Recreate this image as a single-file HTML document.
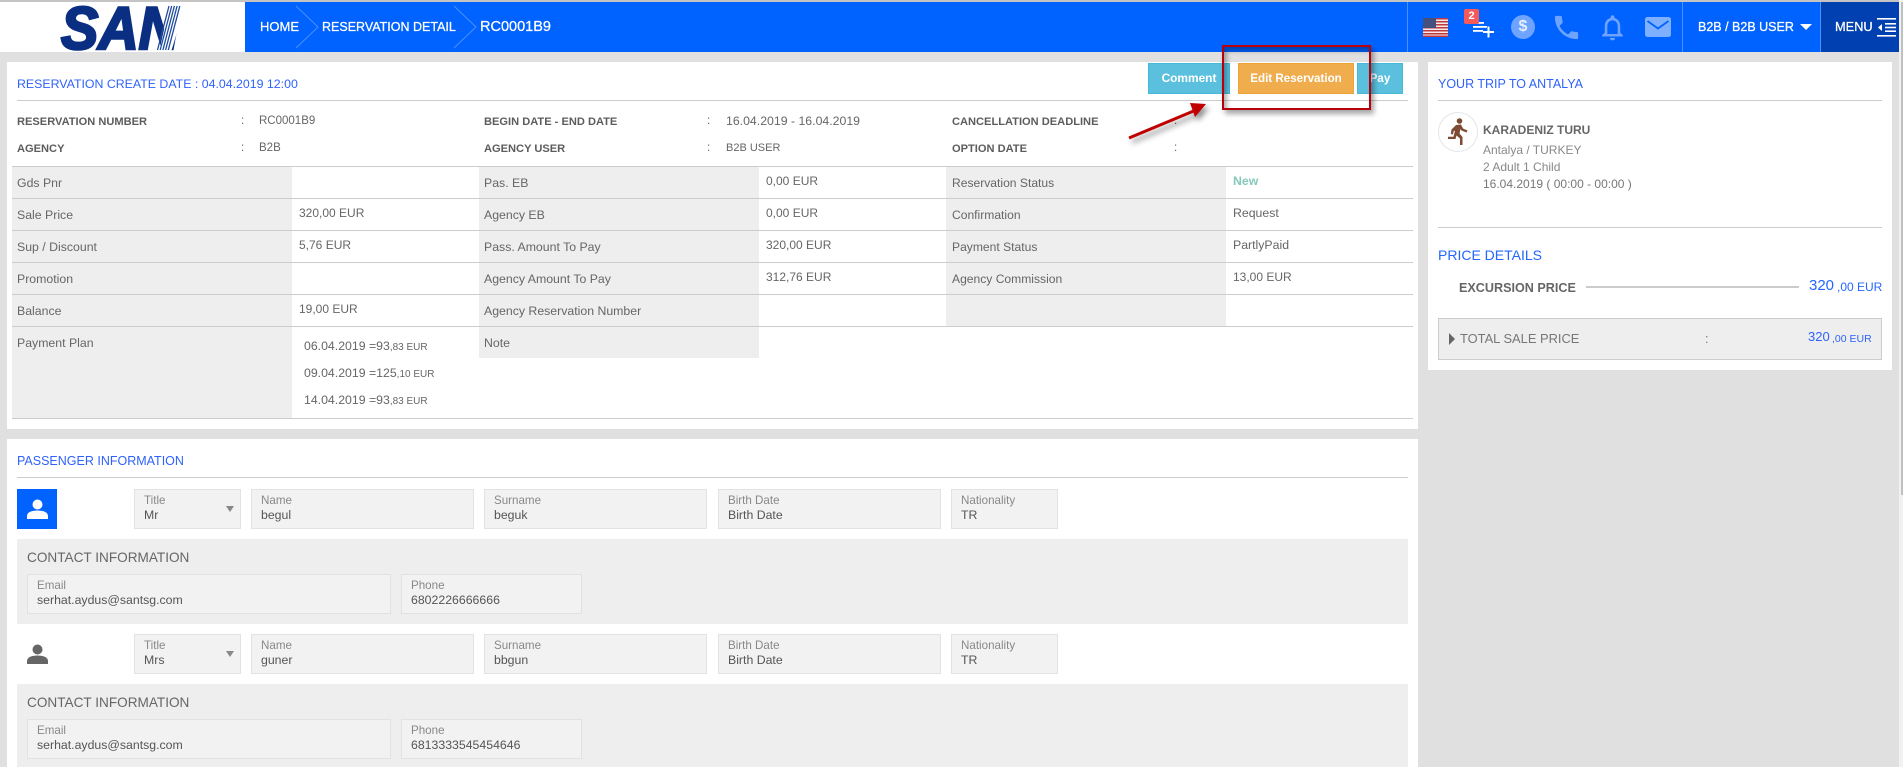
<!DOCTYPE html>
<html lang="en">
<head>
<meta charset="utf-8">
<title>Reservation Detail</title>
<style>
html,body{margin:0;padding:0;width:1903px;height:767px;overflow:hidden;background:#e0e0e0;font-family:"Liberation Sans",sans-serif;color:#666}
.a{position:absolute}
.t{position:absolute;white-space:nowrap;line-height:16px;font-size:12.3px}
.v{font-size:12px}
.h{color:#2f62fb;font-size:12.35px}
.b{font-weight:bold;font-size:11.1px;color:#5d5d5d}
.w{color:#fff}
.line{position:absolute;height:1px;background:#ccc}
.g{position:absolute;background:#eee}
.f{position:absolute;box-sizing:border-box;background:#f2f2f2;border:1px solid #e2e2e2;height:40px}
.f i{position:absolute;left:9px;top:3px;font-style:normal;font-size:11.6px;line-height:16px;color:#888;white-space:nowrap}
.f b{position:absolute;left:9px;top:17px;font-weight:normal;font-size:12.3px;line-height:16px;color:#555;white-space:nowrap}
.btn{position:absolute;box-sizing:border-box;height:31px;color:#fff;font-weight:bold;font-size:11.6px;line-height:29px;text-align:center;border:1px solid #46b8da;background:#5bc0de}
small{font-size:10px}
</style>
</head>
<body>
<!-- Header -->
<div class="a" style="left:0;top:0;width:1903px;height:2px;background:#c4c4c4"></div>
<div class="a" style="left:0;top:2px;width:245px;height:50px;background:#fff"></div>
<div class="a" style="left:245px;top:2px;width:1654px;height:50px;background:#0062ff"></div>
<div class="a" style="left:1820px;top:2px;width:79px;height:50px;background:#0040b0"></div>
<div class="a" style="left:1407px;top:2px;width:1px;height:50px;background:#4c90ff"></div>
<div class="a" style="left:1682px;top:2px;width:1px;height:50px;background:#4c90ff"></div>
<div class="a" style="left:1820px;top:2px;width:1px;height:50px;background:#4c90ff"></div>

<!-- Logo -->
<svg class="a" style="left:40px;top:0" width="160" height="56" viewBox="0 0 160 56">
  <text x="21" y="49" font-family="Liberation Sans" font-weight="bold" font-style="italic" font-size="60" fill="#0a2f82" stroke="#0a2f82" stroke-width="2.6" textLength="118" lengthAdjust="spacingAndGlyphs">SAN</text>
  <path d="M119 52 L131 52 L146 3 L130 3 Z" fill="#fff"/>
  <g stroke="#1d4a9c" stroke-width="1.3">
    <line x1="117.500" y1="50" x2="129" y2="6"/><line x1="120.200" y1="50" x2="131.700" y2="6"/><line x1="122.900" y1="50" x2="134.400" y2="6"/><line x1="125.600" y1="50" x2="137.100" y2="6"/><line x1="128.300" y1="50" x2="139.800" y2="6"/>
  </g>
</svg>

<!-- Breadcrumb -->
<div class="t w" style="left:260px;top:19px;font-size:13px;-webkit-text-stroke:.25px #fff">HOME</div>
<div class="t w" style="left:322px;top:19px;font-size:12.5px;-webkit-text-stroke:.25px #fff">RESERVATION DETAIL</div>
<div class="t w" style="left:480px;top:19px;font-size:14.5px;-webkit-text-stroke:.25px #fff">RC0001B9</div>
<svg class="a" style="left:290px;top:2px" width="200" height="50" fill="none" stroke="#4c90ff" stroke-width="1">
  <path d="M6 4 L28 25 L6 46"/><path d="M164 4 L186 25 L164 46"/>
</svg>

<!-- Flag -->
<svg class="a" style="left:1423px;top:18px" width="25" height="19" viewBox="0 0 25 19">
  <rect width="25" height="19" fill="#f3e9e9"/>
  <g fill="#c0393f"><rect y="0" width="25" height="1.5"/><rect y="3" width="25" height="1.5"/><rect y="6" width="25" height="1.5"/><rect y="9" width="25" height="1.5"/><rect y="12" width="25" height="1.5"/><rect y="15" width="25" height="1.5"/><rect y="17.5" width="25" height="1.5"/></g>
  <rect width="13" height="10" fill="#46507e"/>
</svg>

<!-- List plus with badge -->
<svg class="a" style="left:1470px;top:18px" width="28" height="20" viewBox="0 0 28 20" fill="#fff">
  <rect x="3" y="4" width="11" height="1.800"/><rect x="3" y="8" width="14" height="1.800"/><rect x="3" y="12" width="10" height="1.800"/>
  <rect x="13" y="13" width="11" height="2"/><rect x="17.500" y="8.500" width="2" height="11"/>
</svg>
<div class="a" style="left:1464px;top:9px;width:15px;height:15px;border-radius:2px;background:#f55a5a;color:#fff;font-weight:bold;font-size:11px;line-height:15px;text-align:center">2</div>

<!-- Dollar -->
<div class="a" style="left:1511px;top:15px;width:24px;height:24px;border-radius:50%;background:#6ea4ff;color:#e6efff;font-weight:bold;font-size:16px;line-height:24px;text-align:center">$</div>
<!-- Phone -->
<svg class="a" style="left:1551px;top:12px" width="31" height="31" viewBox="0 0 24 24" fill="#6ea4ff"><path d="M6.62 10.79c1.44 2.83 3.76 5.14 6.59 6.59l2.2-2.2c.27-.27.67-.36 1.02-.24 1.12.37 2.33.57 3.57.57.55 0 1 .45 1 1V20c0 .55-.45 1-1 1-9.39 0-17-7.61-17-17 0-.55.45-1 1-1h3.5c.55 0 1 .45 1 1 0 1.25.2 2.45.57 3.57.11.35.03.74-.25 1.02l-2.2 2.2z"/></svg>
<!-- Bell -->
<svg class="a" style="left:1597px;top:12px" width="31" height="31" viewBox="0 0 24 24" fill="#6ea4ff"><path d="M12 22c1.1 0 2-.9 2-2h-4c0 1.1.9 2 2 2zm6-6v-5c0-3.07-1.63-5.64-4.5-6.32V4c0-.83-.67-1.5-1.5-1.5s-1.5.67-1.5 1.5v.68C7.64 5.36 6 7.92 6 11v5l-2 2v1h16v-1l-2-2zm-2 1H8v-6c0-2.48 1.51-4.5 4-4.5s4 2.02 4 4.5v6z"/></svg>
<!-- Mail -->
<svg class="a" style="left:1645px;top:17px" width="26" height="20" viewBox="0 0 26 20">
  <rect width="26" height="20" rx="2.5" fill="#7fb0ff"/>
  <path d="M2.5 4 L13 11.5 L23.5 4" fill="none" stroke="#0062ff" stroke-width="1.8"/>
</svg>

<div class="t w" style="left:1698px;top:19px;font-size:12.5px;-webkit-text-stroke:.25px #fff">B2B / B2B USER</div>
<div class="a" style="left:1800px;top:24px;width:0;height:0;border-left:6px solid transparent;border-right:6px solid transparent;border-top:6px solid #fff"></div>
<div class="t w" style="left:1835px;top:19px;font-size:12.8px;-webkit-text-stroke:.25px #fff">MENU</div>
<svg class="a" style="left:1877px;top:18px" width="20" height="19" viewBox="0 0 20 19" fill="#fff">
  <rect x="0" y="0" width="19" height="1.6"/><rect x="8" y="5" width="11" height="1.6"/><rect x="8" y="8.7" width="11" height="1.6"/><rect x="8" y="12.4" width="11" height="1.6"/><rect x="0" y="17" width="19" height="1.6"/>
  <path d="M5 6 L1 9.5 L5 13 Z"/>
</svg>

<!-- Scrollbar -->
<div class="a" style="left:1899px;top:0;width:4px;height:767px;background:#f1f1f1"></div>
<div class="a" style="left:1901px;top:2px;width:2px;height:493px;background:#c0c0c0"></div>

<!-- Left card 1 -->
<div class="a" style="left:7px;top:62px;width:1411px;height:367px;background:#fff"></div>
<div class="t h" style="left:17px;top:76px">RESERVATION CREATE DATE : 04.04.2019 12:00</div>
<div class="line" style="left:17px;top:100px;width:1391px"></div>

<div class="btn" style="left:1148px;top:63px;width:82px;font-size:11.9px">Comment</div>
<div class="btn" style="left:1238px;top:63px;width:116px;background:#f0ad4e;border-color:#eea236">Edit Reservation</div>
<div class="btn" style="left:1357px;top:63px;width:46px;text-align:center">Pay</div>

<div class="t b" style="left:17px;top:114px">RESERVATION NUMBER</div>
<div class="t" style="left:241px;top:113px;font-size:11.5px">:</div>
<div class="t" style="left:259px;top:113px;font-size:11.5px">RC0001B9</div>
<div class="t b" style="left:17px;top:141px">AGENCY</div>
<div class="t" style="left:241px;top:140px;font-size:11.5px">:</div>
<div class="t" style="left:259px;top:140px;font-size:11.5px">B2B</div>

<div class="t b" style="left:484px;top:114px">BEGIN DATE - END DATE</div>
<div class="t" style="left:707px;top:113px;font-size:11.5px">:</div>
<div class="t" style="left:726px;top:113px;font-size:12.3px">16.04.2019 - 16.04.2019</div>
<div class="t b" style="left:484px;top:141px">AGENCY USER</div>
<div class="t" style="left:707px;top:140px;font-size:11.5px">:</div>
<div class="t" style="left:726px;top:140px;font-size:11px">B2B USER</div>

<div class="t b" style="left:952px;top:114px">CANCELLATION DEADLINE</div>
<div class="t" style="left:1174px;top:113px;font-size:11.5px">:</div>
<div class="t b" style="left:952px;top:141px">OPTION DATE</div>
<div class="t" style="left:1174px;top:140px;font-size:11.5px">:</div>

<!-- Table -->
<div class="g" style="left:12px;top:166px;width:280px;height:252px"></div>
<div class="g" style="left:479px;top:166px;width:280px;height:192px"></div>
<div class="g" style="left:946px;top:166px;width:280px;height:160px"></div>
<div class="line" style="left:12px;top:166px;width:1401px"></div>
<div class="line" style="left:12px;top:198px;width:1401px"></div>
<div class="line" style="left:12px;top:230px;width:1401px"></div>
<div class="line" style="left:12px;top:262px;width:1401px"></div>
<div class="line" style="left:12px;top:294px;width:1401px"></div>
<div class="line" style="left:12px;top:326px;width:1401px"></div>
<div class="line" style="left:12px;top:418px;width:1401px"></div>

<div class="t" style="left:17px;top:175px">Gds Pnr</div>
<div class="t" style="left:17px;top:207px">Sale Price</div>
<div class="t" style="left:17px;top:239px">Sup / Discount</div>
<div class="t" style="left:17px;top:271px">Promotion</div>
<div class="t" style="left:17px;top:303px">Balance</div>
<div class="t" style="left:17px;top:335px">Payment Plan</div>

<div class="t v" style="left:299px;top:205px">320,00 EUR</div>
<div class="t v" style="left:299px;top:237px">5,76 EUR</div>
<div class="t v" style="left:299px;top:301px">19,00 EUR</div>
<div class="t" style="left:304px;top:338px">06.04.2019 =93<small>,83 EUR</small></div>
<div class="t" style="left:304px;top:365px">09.04.2019 =125<small>,10 EUR</small></div>
<div class="t" style="left:304px;top:392px">14.04.2019 =93<small>,83 EUR</small></div>

<div class="t" style="left:484px;top:175px">Pas. EB</div>
<div class="t" style="left:484px;top:207px">Agency EB</div>
<div class="t" style="left:484px;top:239px">Pass. Amount To Pay</div>
<div class="t" style="left:484px;top:271px">Agency Amount To Pay</div>
<div class="t" style="left:484px;top:303px">Agency Reservation Number</div>
<div class="t" style="left:484px;top:335px">Note</div>

<div class="t v" style="left:766px;top:173px">0,00 EUR</div>
<div class="t v" style="left:766px;top:205px">0,00 EUR</div>
<div class="t v" style="left:766px;top:237px">320,00 EUR</div>
<div class="t v" style="left:766px;top:269px">312,76 EUR</div>

<div class="t" style="left:952px;top:175px;font-size:12.1px">Reservation Status</div>
<div class="t" style="left:952px;top:207px;font-size:12.1px">Confirmation</div>
<div class="t" style="left:952px;top:239px;font-size:12.1px">Payment Status</div>
<div class="t" style="left:952px;top:271px;font-size:12.1px">Agency Commission</div>

<div class="t" style="left:1233px;top:173px;color:#86c9bb;font-weight:bold">New</div>
<div class="t" style="left:1233px;top:205px">Request</div>
<div class="t" style="left:1233px;top:237px">PartlyPaid</div>
<div class="t v" style="left:1233px;top:269px">13,00 EUR</div>

<!-- Annotation -->
<div class="a" style="left:1222px;top:45px;width:145px;height:61px;border:2px solid #b8000c;box-shadow:3px 4px 5px rgba(0,0,0,.35),inset 3px 4px 5px rgba(0,0,0,.3)"></div>
<svg class="a" style="left:1120px;top:95px;filter:drop-shadow(3px 4px 3px rgba(0,0,0,.45))" width="100" height="55" viewBox="1120 95 100 55">
  <line x1="1129" y1="138" x2="1196" y2="110" stroke="#c00000" stroke-width="3"/>
  <path d="M1206 104 L1190 103 L1195 117 Z" fill="#c00000"/>
</svg>

<!-- Left card 2 -->
<div class="a" style="left:7px;top:439px;width:1411px;height:328px;background:#fff"></div>
<div class="t h" style="left:17px;top:453px;font-size:12.5px">PASSENGER INFORMATION</div>
<div class="line" style="left:17px;top:477px;width:1391px"></div>

<div class="a" style="left:17px;top:489px;width:40px;height:40px;background:#0062ff"></div>
<svg class="a" style="left:27px;top:499px" width="21" height="21" viewBox="0 0 21 21" fill="#fff"><circle cx="10.5" cy="5.5" r="5"/><path d="M0 20v-3c0-3.6 4.5-5.5 10.5-5.5S21 13.400 21 17v3z"/></svg>

<div class="f" style="left:134px;top:489px;width:107px"><i>Title</i><b>Mr</b></div>
<div class="a" style="left:226px;top:506px;border-left:4px solid transparent;border-right:4px solid transparent;border-top:6px solid #888"></div>
<div class="f" style="left:251px;top:489px;width:223px"><i>Name</i><b>begul</b></div>
<div class="f" style="left:484px;top:489px;width:223px"><i>Surname</i><b>beguk</b></div>
<div class="f" style="left:718px;top:489px;width:223px"><i>Birth Date</i><b>Birth Date</b></div>
<div class="f" style="left:951px;top:489px;width:107px"><i>Nationality</i><b>TR</b></div>

<div class="g" style="left:17px;top:539px;width:1391px;height:85px"></div>
<div class="t" style="left:27px;top:550px;font-size:13.6px">CONTACT INFORMATION</div>
<div class="f" style="left:27px;top:574px;width:364px"><i>Email</i><b>serhat.aydus@santsg.com</b></div>
<div class="f" style="left:401px;top:574px;width:181px"><i>Phone</i><b>6802226666666</b></div>

<svg class="a" style="left:27px;top:644px" width="21" height="21" viewBox="0 0 21 21" fill="#666"><circle cx="10.500" cy="5.500" r="5"/><path d="M0 20v-3c0-3.600 4.500-5.500 10.500-5.500S21 13.400 21 17v3z"/></svg>

<div class="f" style="left:134px;top:634px;width:107px"><i>Title</i><b>Mrs</b></div>
<div class="a" style="left:226px;top:651px;border-left:4px solid transparent;border-right:4px solid transparent;border-top:6px solid #888"></div>
<div class="f" style="left:251px;top:634px;width:223px"><i>Name</i><b>guner</b></div>
<div class="f" style="left:484px;top:634px;width:223px"><i>Surname</i><b>bbgun</b></div>
<div class="f" style="left:718px;top:634px;width:223px"><i>Birth Date</i><b>Birth Date</b></div>
<div class="f" style="left:951px;top:634px;width:107px"><i>Nationality</i><b>TR</b></div>

<div class="g" style="left:17px;top:684px;width:1391px;height:83px"></div>
<div class="t" style="left:27px;top:695px;font-size:13.6px">CONTACT INFORMATION</div>
<div class="f" style="left:27px;top:719px;width:364px"><i>Email</i><b>serhat.aydus@santsg.com</b></div>
<div class="f" style="left:401px;top:719px;width:181px"><i>Phone</i><b>6813333545454646</b></div>

<!-- Right card -->
<div class="a" style="left:1428px;top:62px;width:464px;height:308px;background:#fff"></div>
<div class="t h" style="left:1438px;top:76px;font-size:12.5px">YOUR TRIP TO ANTALYA</div>
<div class="line" style="left:1438px;top:100px;width:444px"></div>

<div class="a" style="left:1438px;top:112px;width:38px;height:38px;border:1px solid #e3e6ea;border-radius:50%"></div>
<svg class="a" style="left:1447px;top:118px" width="22" height="28" viewBox="0 0 22 28" fill="#7d4a33">
  <circle cx="12.500" cy="3" r="2.800"/>
  <path d="M9 7 L14 6.500 L16 10.500 L20.500 12.500 L19.500 14.500 L14.500 12.500 L13.500 11 L12.500 15.500 L15.500 19 L15.500 27 L13 27 L13 20.500 L9.500 17.500 L8.500 21 L1 21 L1 18.800 L6.500 18.800 L8 12.500 L6.500 13.500 L6 16.500 L3.800 16 L4.500 11.500 Z"/>
</svg>

<div class="t" style="left:1483px;top:122px;font-weight:bold;font-size:12px;color:#666">KARADENIZ TURU</div>
<div class="t" style="left:1483px;top:142px;font-size:12px;color:#888">Antalya / TURKEY</div>
<div class="t" style="left:1483px;top:159px;font-size:12px;color:#888">2 Adult 1 Child</div>
<div class="t" style="left:1483px;top:176px;font-size:12px;color:#777">16.04.2019 ( 00:00 - 00:00 )</div>
<div class="line" style="left:1438px;top:227px;width:444px"></div>

<div class="t" style="left:1438px;top:247px;font-size:14px;color:#2466ff">PRICE DETAILS</div>
<div class="t" style="left:1459px;top:280px;font-size:12.6px;font-weight:bold;color:#666">EXCURSION PRICE</div>
<div class="a" style="left:1586px;top:286px;width:213px;height:2px;background:#ccc"></div>
<div class="t" style="left:1809px;top:278px;font-size:15px;color:#2466ff">320</div>
<div class="t" style="left:1837px;top:279px;font-size:12px;color:#2466ff">,00 EUR</div>

<div class="a" style="left:1438px;top:318px;width:442px;height:40px;border:1px solid #ccc;background:#eee"></div>
<div class="a" style="left:1449px;top:333px;border-top:6px solid transparent;border-bottom:6px solid transparent;border-left:6px solid #666"></div>
<div class="t" style="left:1460px;top:331px;font-size:12.9px;color:#777">TOTAL SALE PRICE</div>
<div class="t" style="left:1705px;top:331px;font-size:12.6px;color:#777">:</div>
<div class="t" style="left:1808px;top:329px;font-size:13px;color:#2f62fb">320</div>
<div class="t" style="left:1832px;top:331px;font-size:10.5px;color:#2f62fb">,00 EUR</div>
</body>
</html>
